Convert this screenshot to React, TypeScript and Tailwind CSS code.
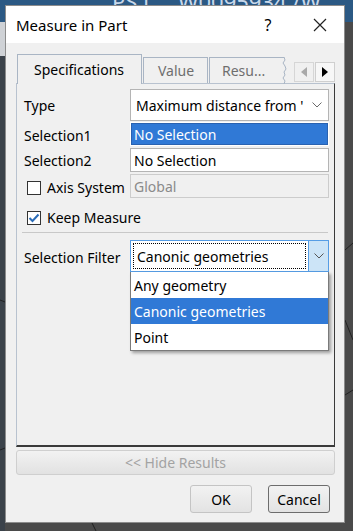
import React from "react";

const font = { fontFamily: '"Noto Sans", "Open Sans", sans-serif' };

function Chevron({ className = "" }: { className?: string }) {
  return (
    <svg width="10" height="6" viewBox="0 0 10 6" className={className}>
      <path d="M0.5 0.5 L5 5 L9.5 0.5" fill="none" stroke="currentColor" strokeWidth="1" />
    </svg>
  );
}

function CheckBox({ checked }: { checked?: boolean }) {
  return (
    <div className="w-[14px] h-[14px] border border-[#333] bg-white flex items-center justify-center shrink-0">
      {checked && (
        <svg width="12" height="12" viewBox="0 0 12 12">
          <path d="M1.5 6 L4.5 9 L10.5 2.5" fill="none" stroke="#2b6cb8" strokeWidth="2" />
        </svg>
      )}
    </div>
  );
}

function Field({ children, tone = "normal" }: { children: React.ReactNode; tone?: "normal" | "active" | "disabled" }) {
  if (tone === "active") {
    return (
      <div className="h-[24px] border border-white bg-white">
        <div className="h-full bg-[#3079d6] border border-[#2a62b0] text-white flex items-center pl-[2px]">{children}</div>
      </div>
    );
  }
  return (
    <div
      className={
        "h-[24px] border flex items-center pl-[3px] " +
        (tone === "disabled" ? "border-[#cccccc] bg-[#f0f0f0] text-[#8a8a8a]" : "border-[#b4b4b4] bg-white text-black")
      }
    >
      {children}
    </div>
  );
}

export default function App() {
  return (
    <div className="relative w-[353px] h-[531px] overflow-hidden bg-[#4a4a4a] text-[14px] text-black" style={font}>
      {/* app window behind */}
      <div className="absolute left-0 top-0 w-full h-[22px] bg-[#2b5984]" />
      <div className="absolute left-[112px] top-0 w-[230px] h-[5px] overflow-hidden">
        <div className="text-[22px] leading-none text-[#c9d8ea] whitespace-nowrap -translate-y-[10px]">PS L...   W0095934 /W</div>
      </div>
      <div className="absolute left-0 top-[22px] w-[5px] h-[34px] bg-[#cfd2d6]" />
      <div className="absolute left-0 top-[56px] w-[5px] h-[475px] bg-[#3b424a]" />
      <svg className="absolute inset-0" width="353" height="531">
        <path d="M345 250 L353 243" stroke="#222" strokeWidth="1" fill="none" />
        <path d="M345 320 L353 340" stroke="#222" strokeWidth="1" fill="none" />
        <path d="M345 395 L353 390" stroke="#222" strokeWidth="1" fill="none" />
        <path d="M0 450 L5 448" stroke="#222" strokeWidth="1" fill="none" />
        <path d="M92 523 L96 531" stroke="#222" strokeWidth="1" fill="none" />
        <path d="M0 300 L5 302" stroke="#222" strokeWidth="1" fill="none" />
      </svg>

      {/* dialog */}
      <div className="absolute left-[5px] top-[5px] w-[340px] h-[518px] bg-[#f0f0f0] border border-[#8c8c8c] flex flex-col">
        <div className="h-[37px] bg-white flex items-center shrink-0">
          <span className="pl-[10px] flex-1 pt-[1px] text-[15px]">Measure in Part</span>
          <span className="w-[20px] text-center mr-[35px] text-[16px]">?</span>
          <svg width="14" height="14" viewBox="0 0 14 14" className="mr-[17px]">
            <path d="M1 1 L13 13 M13 1 L1 13" stroke="#222" strokeWidth="1.2" fill="none" />
          </svg>
        </div>

        <div className="flex-1 flex flex-col pl-[10px] pr-[9px]">
          {/* tabs */}
          <div className="mt-[10px] h-[30px] flex items-end relative">
            <div className="h-[30px] w-[125px] ml-px border border-b-0 border-[#a9b5c4] bg-[#f0f0f0] flex items-center pl-[16px] relative z-10 -mb-px pb-px">
              Specifications
            </div>
            <div className="h-[26px] w-[65px] ml-[1px] border border-b-0 border-[#a9b5c4] text-[#6e6e6e] flex items-center pl-[14px]">Value</div>
            <div className="h-[26px] w-[75px] ml-[1px] border border-b-0 border-r-0 border-[#a9b5c4] text-[#6e6e6e] flex items-center pl-[12px] relative">
              Resu...
              <svg className="absolute right-[-4px] top-[-1px]" width="6" height="27" viewBox="0 0 6 27">
                <path d="M2 0 L3 3 L1 6 L3 9 L4 12 L2 15 L3 18 L1 21 L3 24 L2 27" stroke="#a9b5c4" fill="none" />
              </svg>
            </div>
            <div className="ml-auto mb-[1px] flex gap-px">
              <div className="w-[20px] h-[20px] border border-[#d6d6d6] bg-[#f0f0f0] flex items-center justify-center">
                <svg width="6" height="10" viewBox="0 0 6 10"><path d="M6 0 L0 5 L6 10 Z" fill="#a9a9a9" /></svg>
              </div>
              <div className="w-[20px] h-[20px] border border-[#cfcfcf] bg-[#f7f7f7] flex items-center justify-center">
                <svg width="6" height="10" viewBox="0 0 6 10"><path d="M0 0 L6 5 L0 10 Z" fill="#000" /></svg>
              </div>
            </div>
          </div>

          {/* panel */}
          <div className="h-[364px] border border-[#b8c2cf] border-r-[#3a3a3a] border-b-[#3a3a3a] border-b-2 bg-[#f0f0f0] pl-[7px] pr-[5px] pt-[5px] flex flex-col">
            <div className="grid grid-cols-[106px_1fr] items-center">
              <span>Type</span>
              <div className="h-[32px] border border-[#b4b4b4] bg-white flex items-center pl-[5px] pr-[6px]">
                <span className="flex-1 whitespace-nowrap overflow-hidden">Maximum distance from '</span>
                <Chevron className="text-[#6a6a6a] ml-[4px]" />
              </div>
            </div>
            <div className="grid grid-cols-[106px_1fr] items-center mt-[1px]">
              <span className="pt-[3px]">Selection1</span>
              <Field tone="active">No Selection</Field>
            </div>
            <div className="grid grid-cols-[106px_1fr] items-center mt-[2px]">
              <span>Selection2</span>
              <Field>No Selection</Field>
            </div>
            <div className="grid grid-cols-[106px_1fr] items-center mt-[2px]">
              <div className="flex items-center gap-[6px] pl-[3px] pt-[3px] whitespace-nowrap">
                <CheckBox />
                <span>Axis System</span>
              </div>
              <Field tone="disabled">Global</Field>
            </div>
            <div className="flex items-center gap-[6px] pl-[3px] mt-[9px]">
              <CheckBox checked />
              <span>Keep Measure</span>
            </div>
            <div className="h-px bg-[#c8c8c8] mt-[4px] -ml-[2px] mr-[1px]" />
            <div className="grid grid-cols-[106px_1fr] items-start mt-[7px]">
              <span className="mt-[7px] whitespace-nowrap">Selection Filter</span>
              <div className="flex flex-col">
                <div className="h-[32px] border border-[#569de5] bg-white flex">
                  <div className="flex-1 m-[2px] border border-dotted border-black flex items-center pl-[3px] whitespace-nowrap">
                    Canonic geometries
                  </div>
                  <div className="w-[20px] bg-[#cce4f7] border-l border-[#569de5] flex items-center justify-center">
                    <Chevron className="text-[#555]" />
                  </div>
                </div>
                <div className="border border-[#7a7a7a] border-t-0 bg-white shadow-[2px_2px_3px_rgba(0,0,0,0.35)]">
                  <div className="h-[26px] flex items-center pl-[3px]">Any geometry</div>
                  <div className="h-[26px] flex items-center pl-[3px] bg-[#3079d6] text-white">Canonic geometries</div>
                  <div className="h-[26px] flex items-center pl-[3px]">Point</div>
                </div>
              </div>
            </div>
          </div>

          {/* hide results */}
          <div className="mt-[3px] h-[25px] border border-[#cfcfcf] rounded-[3px] bg-gradient-to-b from-[#f2f2f2] to-[#e2e2e2] flex items-center justify-center text-[#a3a3a3]">
            &lt;&lt; Hide Results
          </div>

          {/* buttons */}
          <div className="mt-[10px] flex justify-end gap-[16px] pr-[5px]">
            <div className="w-[62px] h-[28px] border border-[#c4c4c4] rounded-[3px] bg-gradient-to-b from-[#f2f2f2] to-[#e3e3e3] flex items-center justify-center">
              OK
            </div>
            <div className="w-[62px] h-[28px] border border-[#6d6d6d] rounded-[3px] bg-gradient-to-b from-[#f2f2f2] to-[#e3e3e3] flex items-center justify-center">
              Cancel
            </div>
          </div>
        </div>
      </div>
    </div>
  );
}
